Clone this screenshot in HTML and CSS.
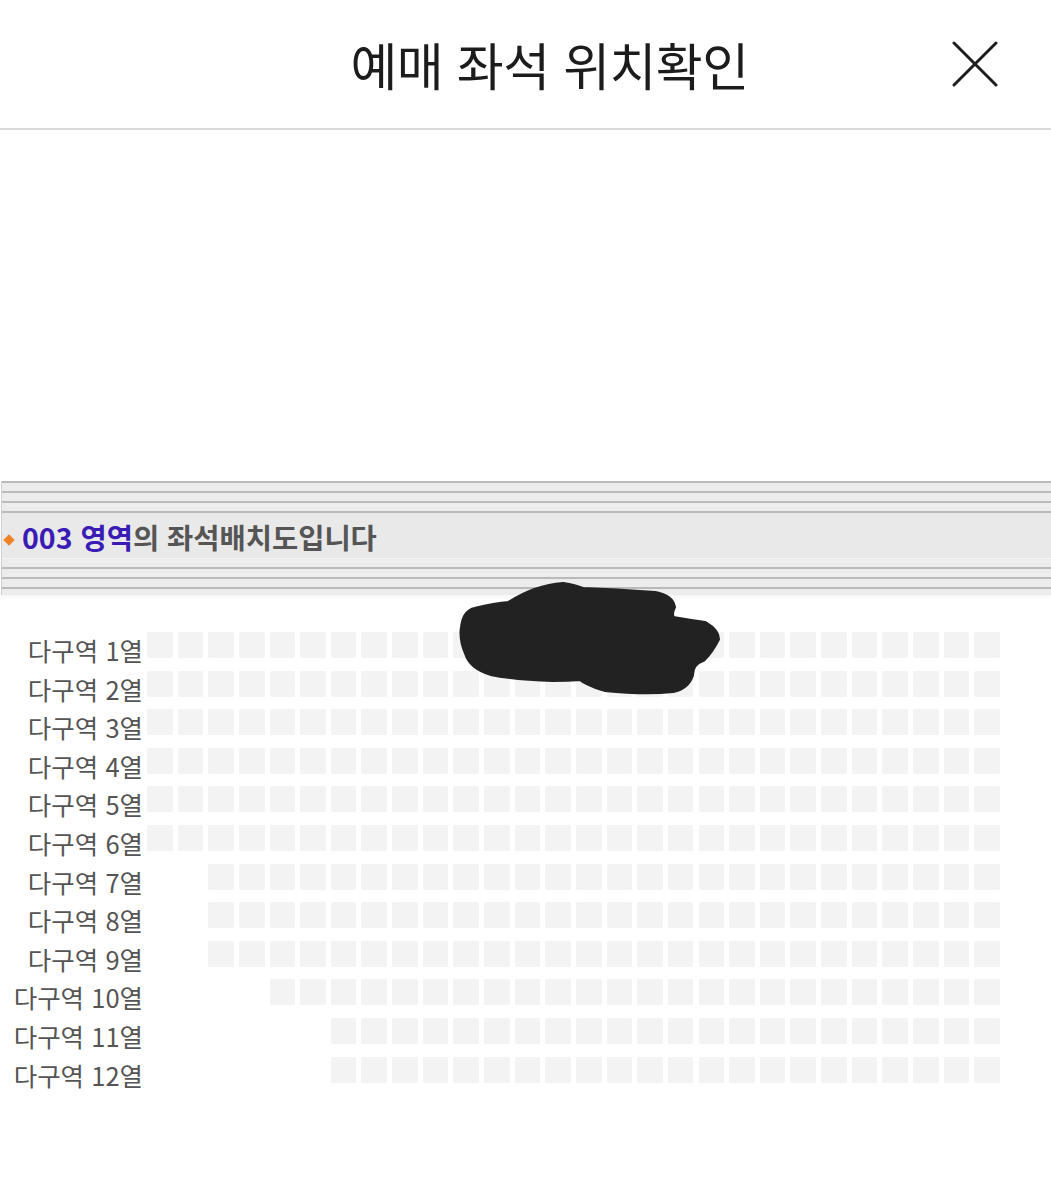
FILE: index.html
```html
<!DOCTYPE html>
<html lang="ko">

<head>
  <meta charset="UTF-8">
  <title>예매 좌석 위치확인</title>
  <link rel="stylesheet" href="styles.css">
</head>

<body>
  <div class="page">
    <header class="top-bar">
      <h1 class="top-title">예매 좌석 위치확인</h1>
      <button class="close-btn" type="button" aria-label="닫기">
        <svg width="46" height="46" viewBox="0 0 46 46">
          <path d="M2 2 L44 44 M44 2 L2 44" stroke="#1e1e1e" stroke-width="3" stroke-linecap="round" fill="none" />
        </svg>
      </button>
    </header>

    <div class="stage-area"></div>

    <div class="area-banner">
      <div class="banner-lines"></div>
      <div class="banner-text"><span class="diamond"></span><span class="area-name">003 영역</span>의 좌석배치도입니다</div>
      <div class="banner-lines banner-lines-bottom"></div>
    </div>

    <div class="seat-map">
      <div id="seat-rows"></div>

      <!-- 가림 처리 -->
      <svg class="blot" width="270" height="120" viewBox="0 0 270 120">
        <path d="M8 48 Q10 33 20 31 Q40 26 54 25 Q80 8 108 6 Q120 8 128 11 Q160 12 200 15 Q216 18 218 28 Q214 36 218 40 Q235 43 250 45 Q262 52 262 60 Q256 72 248 80 Q236 84 236 96 Q232 108 218 111 Q190 114 150 110 Q130 104 126 99 Q112 100 98 100 Q60 99 36 94 Q16 88 12 74 Q6 60 8 48 Z"
          fill="#222" stroke="#222" stroke-width="6" stroke-linejoin="round" />
      </svg>
    </div>
  </div>

  <script>
    // 열마다 좌석 시작 칸 (28칸 기준, 0부터)
    const seatRows = [
      { name: "다구역 1열", start: 0 },
      { name: "다구역 2열", start: 0 },
      { name: "다구역 3열", start: 0 },
      { name: "다구역 4열", start: 0 },
      { name: "다구역 5열", start: 0 },
      { name: "다구역 6열", start: 0 },
      { name: "다구역 7열", start: 2 },
      { name: "다구역 8열", start: 2 },
      { name: "다구역 9열", start: 2 },
      { name: "다구역 10열", start: 4 },
      { name: "다구역 11열", start: 6 },
      { name: "다구역 12열", start: 6 },
    ];
    const totalCols = 28;

    const seatRowsElement = document.querySelector("#seat-rows");

    seatRows.forEach((row) => {
      const rowElement = document.createElement("div");
      rowElement.className = "seat-row";

      const labelElement = document.createElement("span");
      labelElement.className = "row-label";
      labelElement.textContent = row.name;
      rowElement.appendChild(labelElement);

      const seatsElement = document.createElement("div");
      seatsElement.className = "seats";
      for (let i = 0; i < totalCols; i++) {
        const seat = document.createElement("span");
        seat.className = i < row.start ? "seat empty" : "seat";
        seatsElement.appendChild(seat);
      }
      rowElement.appendChild(seatsElement);

      seatRowsElement.appendChild(rowElement);
    });
  </script>
</body>

</html>
```

FILE: styles.css
```css
body {
  margin: 0;
  background-color: #fff;
  font-family: "Noto Sans CJK KR", "Noto Sans", sans-serif;
  color: #222;
}

.page {
  position: relative;
  width: 1051px;
}

/* header */
.top-bar {
  display: flex;
  align-items: center;
  justify-content: center;
  height: 128px;
  border-bottom: 2px solid #dadada;
  position: relative;
}

.top-title {
  margin: 0 0 0 48px;
  font-size: 51px;
  font-weight: 400;
  letter-spacing: -0.6px;
  color: #1c1c1c;
}

.close-btn {
  position: absolute;
  right: 53px;
  top: 41px;
  padding: 0;
  border: none;
  background: none;
  cursor: pointer;
  line-height: 0;
}

.stage-area {
  height: 351px;
}

/* area banner */
.area-banner {
  margin-left: 1px;
  background-color: #e9e9e9;
  border-left: 1px solid #d0d0d0;
}

.banner-lines {
  height: 32px;
  background: repeating-linear-gradient(
    to bottom,
    #bababa 0px,
    #bababa 2px,
    #ececec 2px,
    #ececec 10px
  );
}

.banner-lines-bottom {
  height: 36px;
  background: repeating-linear-gradient(
    to bottom,
    #ececec 0px,
    #ececec 8px,
    #bababa 8px,
    #bababa 10px
  );
  border-top: 1px solid #f4f4f4;
  box-shadow: 0 3px 4px rgba(0, 0, 0, 0.04);
}

.banner-text {
  height: 45px;
  line-height: 48px;
  padding-left: 1px;
  font-size: 28.5px;
  font-weight: 700;
  color: #555;
  white-space: nowrap;
}

.diamond {
  display: inline-block;
  width: 8px;
  height: 8px;
  margin: 0 9px 3px 2px;
  vertical-align: middle;
  background-color: #f08326;
  transform: rotate(45deg);
}

.area-name {
  color: #3a1cb4;
}

/* seat map */
.seat-map {
  position: relative;
  padding-top: 36px;
  padding-bottom: 100px;
}

.seat-row {
  display: flex;
  align-items: flex-start;
  height: 38.6px;
}

.row-label {
  width: 143px;
  text-align: right;
  font-size: 25.5px;
  line-height: 38px;
  color: #555;
  white-space: nowrap;
}

.seats {
  display: grid;
  grid-template-columns: repeat(28, 25.6px);
  column-gap: 5.05px;
  margin-left: 4px;
  margin-top: 1px;
}

.seat {
  height: 26px;
  background-color: #f3f3f3;
  border-radius: 2px;
}

.seat.empty {
  background-color: transparent;
}

.blot {
  position: absolute;
  left: 455px;
  top: -16px;
}
```
